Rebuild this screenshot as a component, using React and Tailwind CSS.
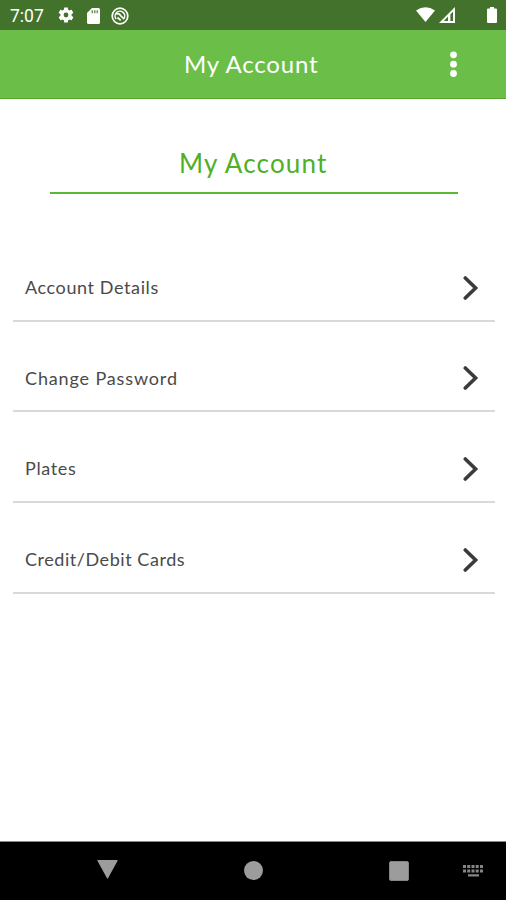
const rows = [
  { label: 'Account Details', box: 'h-[91px]', text: 'tracking-[0.6px]' },
  { label: 'Change Password', box: 'h-[90px]', text: 'tracking-[0.86px]' },
  { label: 'Plates', box: 'h-[91px]', text: 'tracking-[0.65px]' },
  { label: 'Credit/Debit Cards', box: 'h-[91px]', text: 'tracking-[0.55px]' },
];

function StatusBar() {
  return (
    <div className="h-[30px] bg-[#42722b] flex items-center text-white">
      <span className="ml-[10px] w-[48px] text-[17.5px] leading-[30px] pt-[2px] font-['Roboto',sans-serif]">7:07</span>
      <svg className="w-[18px] h-[18px] -ml-px" viewBox="0 0 24 24" fill="currentColor">
        <path fillRule="evenodd" d="M19.400 13a7.800 7.800 0 0 0 0-2l2.100-1.600c.2-.2.3-.5.1-.700l-2-3.400c-.1-.2-.4-.3-.6-.2l-2.500 1a7.500 7.500 0 0 0-1.700-1L14.400 2.400c0-.2-.2-.4-.4-.4h-4c-.2 0-.5.2-.5.4l-.4 2.700a7.500 7.500 0 0 0-1.700 1l-2.500-1c-.2-.1-.5 0-.6.2l-2 3.400c-.1.2-.1.5.1.700L4.600 11a7.800 7.800 0 0 0 0 2l-2.100 1.600c-.2.2-.3.5-.1.700l2 3.400c.1.2.4.3.6.2l2.500-1a7.500 7.500 0 0 0 1.700 1l.4 2.700c0 .2.2.4.5.4h4c.2 0 .4-.2.4-.4l.4-2.700a7.500 7.500 0 0 0 1.700-1l2.500 1c.2.1.5 0 .6-.2l2-3.400c.1-.2.1-.5-.1-.7zM12 15.200a3.200 3.200 0 1 1 0-6.400 3.200 3.200 0 0 1 0 6.400z" />
      </svg>
      <svg className="ml-3 w-[13px] h-4 mt-px" viewBox="0 0 13 16">
        <path fill="currentColor" d="M5 0h6.500Q13 0 13 1.500v13q0 1.500-1.500 1.500h-10Q0 16 0 14.500V5z" />
        <path stroke="#6f9460" strokeWidth="1.500" d="M5.300 2.300v3M7.800 2.300v3M10.300 2.300v3" />
      </svg>
      <svg className="ml-[11px] w-[18px] h-[18px] mt-px" viewBox="0 0 18 18" fill="none" stroke="currentColor">
        <circle cx="9" cy="9" r="7.800" strokeWidth="1.700" />
        <path strokeWidth="1.500" d="M12.900 11.700A4.800 4.800 0 1 0 5.200 12" />
        <path strokeWidth="1.700" d="M5.300 7.200c2-1 3.400-.4 4.200 1.400l3.700 3.500M6.500 10.500l3.200 2.900" />
      </svg>
      <svg className="ml-auto w-[19px] h-[15px] -mt-px" viewBox="0 0 19 15" fill="currentColor">
        <path d="M0 3.500Q9.500-3 19 3.500L9.500 15z" />
      </svg>
      <svg className="ml-[4px] w-4 h-4" viewBox="0 0 16 16">
        <path fill="currentColor" fillRule="evenodd" d="M16 0v16H0zM14 4.800v9.200h-2.600V7.200zM9.500 9v5H4.800z" />
        <path fill="currentColor" d="M9 8h1.500v7H9z" />
      </svg>
      <svg className="ml-8 mr-[9px] w-[10px] h-4" viewBox="0 0 10 16" fill="currentColor">
        <path d="M3 0h4v1.600h2q1 0 1 1V15q0 1-1 1H1q-1 0-1-1V2.600q0-1 1-1h2z" />
      </svg>
    </div>
  );
}

function Header() {
  return (
    <header className="h-[69px] bg-[#6bbe48] border-b border-[#55a72d] flex items-center">
      <h1 className="ml-[184px] w-[260px] text-[24px] leading-[68px] text-white tracking-[0.8px] whitespace-nowrap">My Account</h1>
      <svg className="w-5 h-7" viewBox="0 0 20 28" fill="#fff">
        <circle cx="9.500" cy="4.800" r="3.400" />
        <circle cx="9.500" cy="14.200" r="3.400" />
        <circle cx="9.500" cy="23.500" r="3.400" />
      </svg>
    </header>
  );
}

function NavBar() {
  return (
    <nav className="h-[59px] bg-black border-t border-[#8a8a8a] flex items-center text-[#9c9c9c]">
      <svg className="ml-[97px] w-[21px] h-[19px] -mt-[3px]" viewBox="0 0 21 19" fill="currentColor">
        <path d="M.8 0h19.400q.8 0 .4.800L11 18.300q-.5.900-1 0L.4.800Q0 0 .8 0z" />
      </svg>
      <div className="ml-[126px] w-[19px] h-[19px] -mt-px rounded-full bg-[#9c9c9c]" />
      <div className="ml-[126px] w-[20px] h-[20px] rounded-[2px] bg-[#9c9c9c] border border-[#858585]" />
      <svg className="ml-[54px] w-5 h-[13px]" viewBox="0 0 20 13" fill="#858585">
        <path d="M0 0h3v3H0zM4.200 0h3v3h-3zM8.500 0h3v3h-3zM12.700 0h3v3h-3zM17 0h3v3h-3zM0 4.500h3v3H0zM4.200 4.500h3v3h-3zM8.500 4.500h3v3h-3zM12.700 4.500h3v3h-3zM17 4.500h3v3h-3zM5 9.200h11v2.300H5z" />
      </svg>
    </nav>
  );
}

export default function App() {
  return (
    <div className="w-[506px] h-[900px] bg-white flex flex-col overflow-hidden font-['Lato',sans-serif]">
      <StatusBar />
      <Header />
      <main className="flex-1">
        <div className="ml-[50px] w-[408px] h-[95px] border-b-2 border-[#5bb834]">
          <h2 className="ml-[129px] pt-[44px] text-[26px] leading-10 text-[#4faf27] tracking-[1.15px] whitespace-nowrap">My Account</h2>
        </div>
        <ul className="ml-[13px] w-[482px] mt-[37px]">
          {rows.map((r) => (
            <li key={r.label} className={`${r.box} pt-[2px] border-b-2 border-[#d9d9d9] flex items-center justify-between`}>
              <span className={`ml-3 mt-[21px] text-[18px] leading-6 text-[#4a4a4a] whitespace-nowrap ${r.text}`}>{r.label}</span>
              <svg className="w-4 h-6 mr-4 mt-[22px]" viewBox="0 0 16 24" fill="none" stroke="#3b3b3d" strokeWidth="3.600" strokeLinecap="round">
                <path d="M2.300 2 12.600 12 2.300 22" />
              </svg>
            </li>
          ))}
        </ul>
      </main>
      <NavBar />
    </div>
  );
}
